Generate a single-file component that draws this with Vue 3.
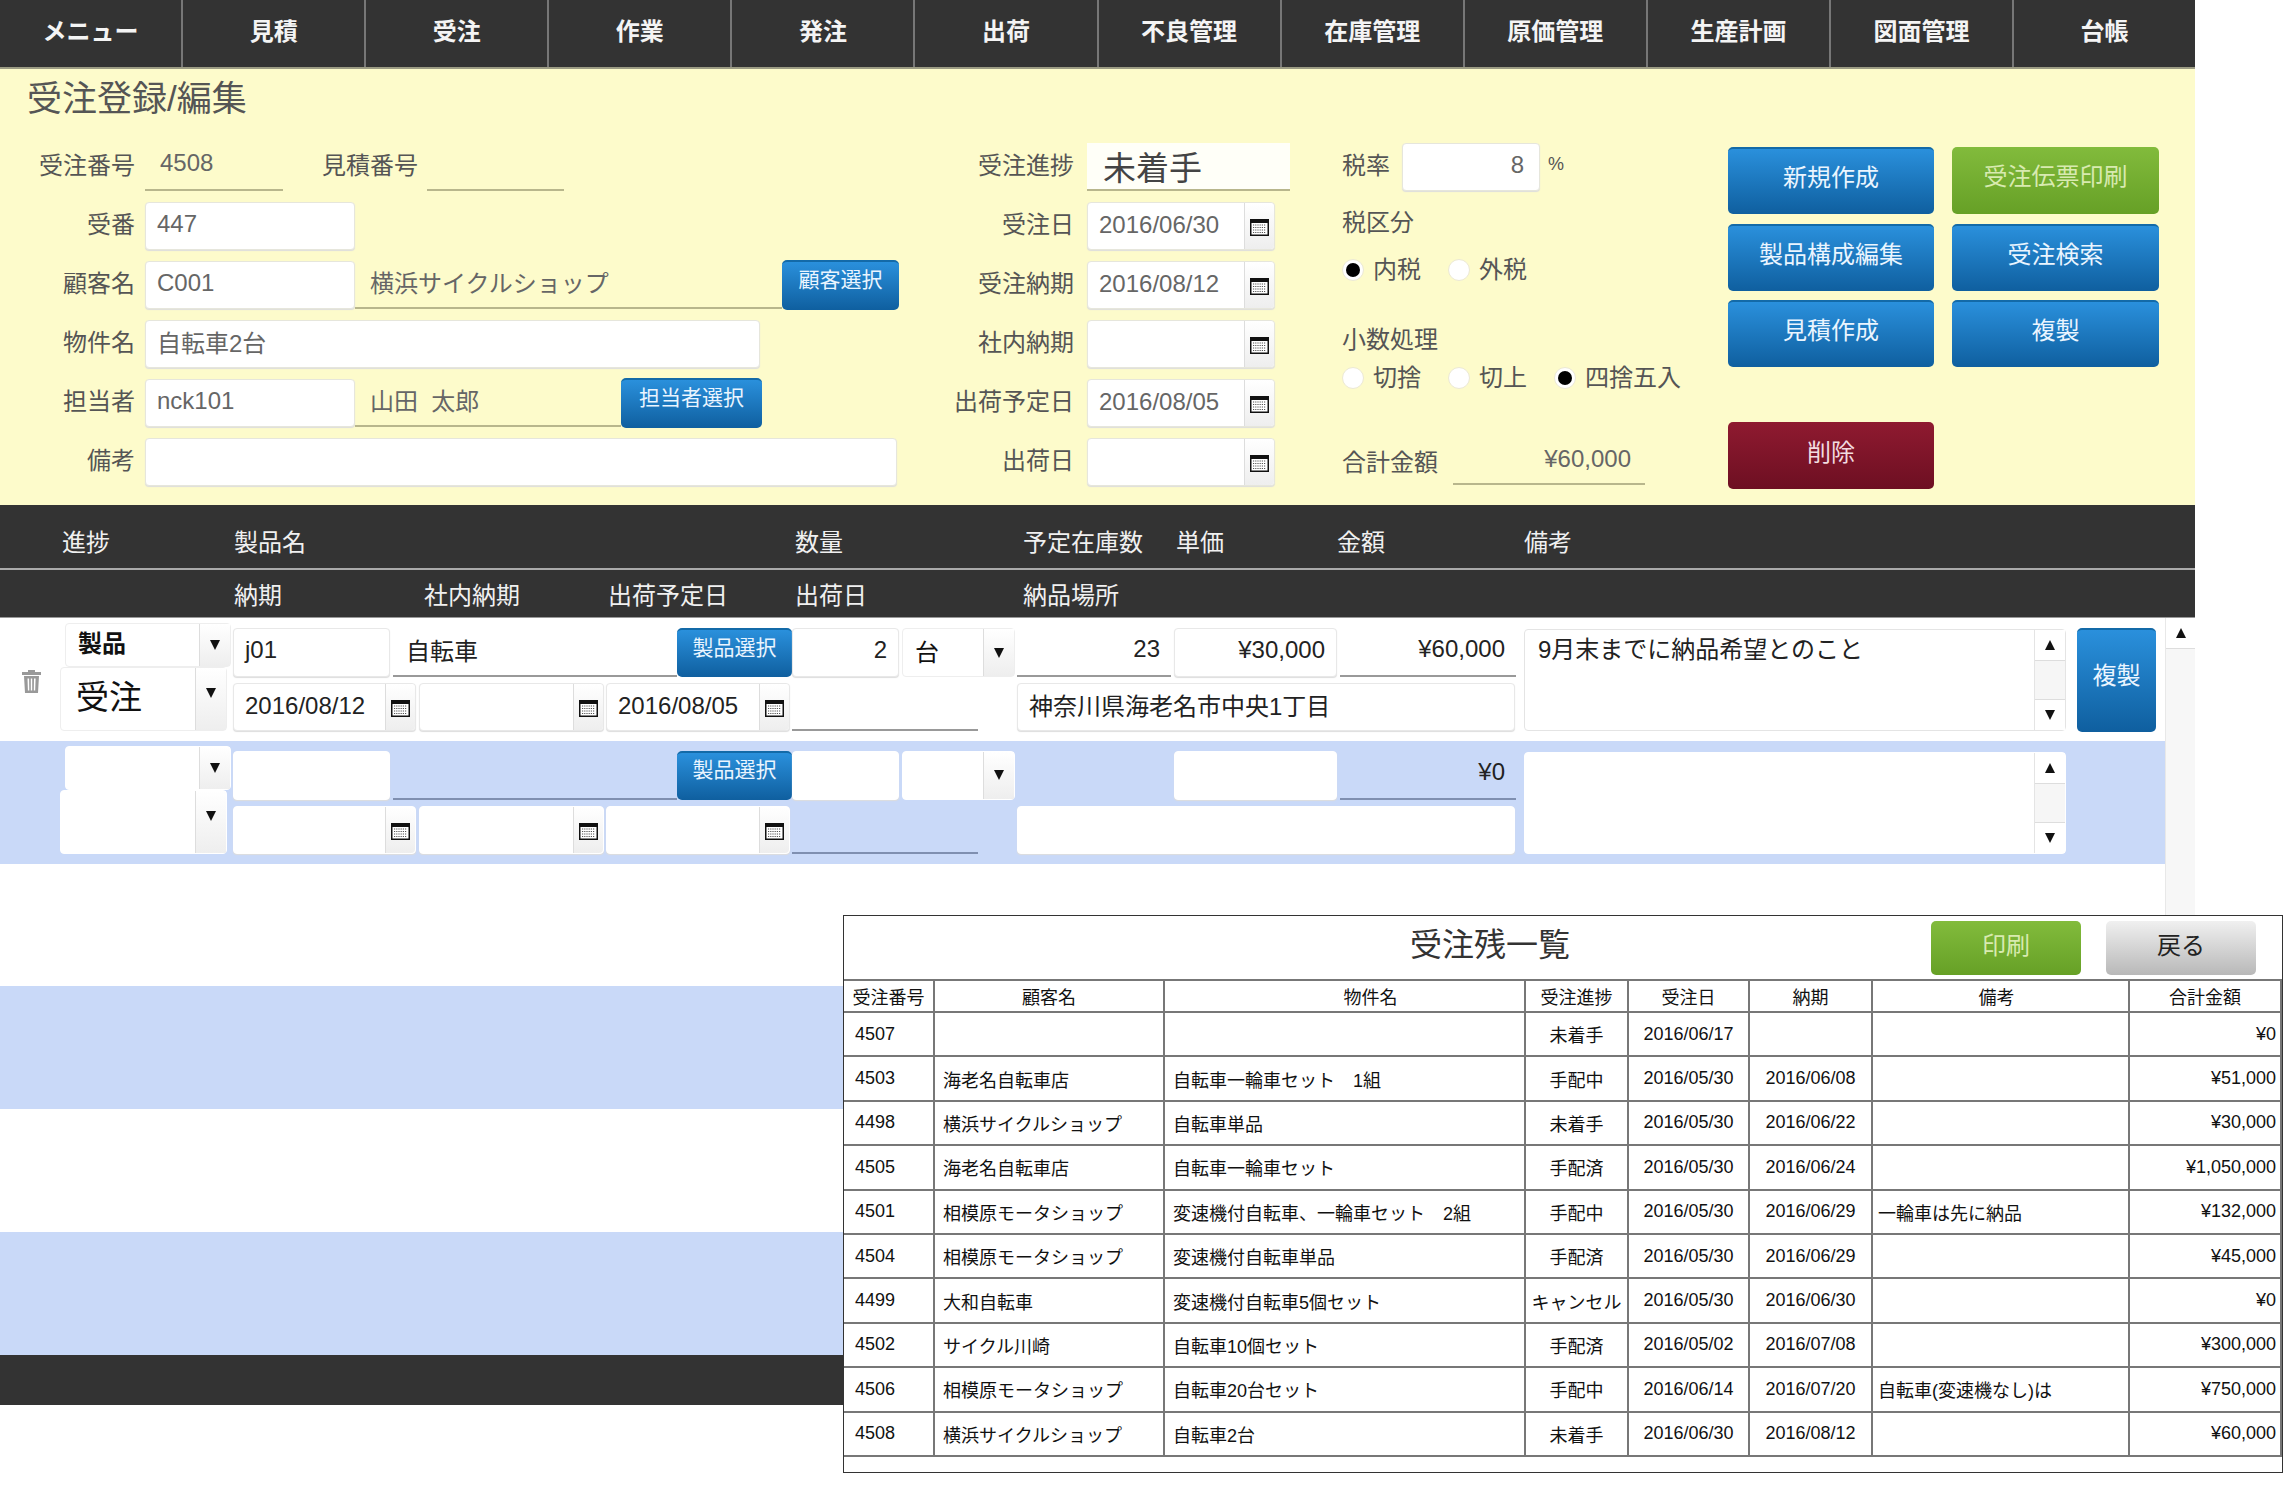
<template>
  <div class="app">
    <svg class="defs" width="0" height="0">
      <symbol id="cal" viewBox="0 0 19 17">
        <rect width="19" height="17" fill="#111" />
        <rect x="1.5" y="4" width="16" height="11.5" fill="#fff" />
        <path d="M3 6h13M3 8.5h13M3 11h13M3 13.5h13" stroke="#555" stroke-width="1" stroke-dasharray="1.2 1" />
      </symbol>
    </svg>

    <div class="page">
      <nav class="nav">
        <div v-for="item in navItems" :key="item" class="nav-item">{{ item }}</div>
      </nav>

      <section class="head">
        <h1 class="title">受注登録/編集</h1>
        <div class="form">
          <div class="col-left">
            <div class="f-row">
              <span class="label">受注番号</span>
              <span class="line line-no">4508</span>
              <span class="label label-est">見積番号</span>
              <span class="line line-est"></span>
            </div>
            <div class="f-row">
              <span class="label">受番</span>
              <div class="field w-code">447</div>
            </div>
            <div class="f-row">
              <span class="label">顧客名</span>
              <div class="field w-code">C001</div>
              <span class="line line-cust">横浜サイクルショップ</span>
              <button class="btn blue btn-cust">顧客選択</button>
            </div>
            <div class="f-row">
              <span class="label">物件名</span>
              <div class="field w-name">自転車2台</div>
            </div>
            <div class="f-row">
              <span class="label">担当者</span>
              <div class="field w-code">nck101</div>
              <span class="line line-staff">山田&nbsp;&nbsp;太郎</span>
              <button class="btn blue btn-staff">担当者選択</button>
            </div>
            <div class="f-row">
              <span class="label">備考</span>
              <div class="field w-note"></div>
            </div>
          </div>

          <div class="col-mid">
            <div class="f-row">
              <span class="label label-mid">受注進捗</span>
              <div class="status">未着手</div>
            </div>
            <div v-for="d in headDates" :key="d.label" class="f-row">
              <span class="label label-mid">{{ d.label }}</span>
              <div class="field date w-date">
                <span class="date-text">{{ d.value }}</span>
                <span class="addon"><svg width="19" height="17"><use href="#cal" /></svg></span>
              </div>
            </div>
          </div>

          <div class="col-tax">
            <div class="tax-rate">
              <span class="label-tax">税率</span>
              <div class="field rate">8</div>
              <span class="pct">%</span>
            </div>
            <div class="label-tax tax-kind">税区分</div>
            <div class="radios radios-tax">
              <span class="radio on"></span><span class="r-text">内税</span>
              <span class="radio"></span><span class="r-text">外税</span>
            </div>
            <div class="label-tax tax-round">小数処理</div>
            <div class="radios">
              <span class="radio"></span><span class="r-text">切捨</span>
              <span class="radio"></span><span class="r-text">切上</span>
              <span class="radio on"></span><span class="r-text">四捨五入</span>
            </div>
            <div class="tax-total">
              <span class="label-tax">合計金額</span>
              <span class="total">¥60,000</span>
            </div>
          </div>

          <div class="col-btn">
            <div class="btn-grid">
              <button class="btn blue">新規作成</button>
              <button class="btn green">受注伝票印刷</button>
              <button class="btn blue">製品構成編集</button>
              <button class="btn blue">受注検索</button>
              <button class="btn blue">見積作成</button>
              <button class="btn blue">複製</button>
            </div>
            <button class="btn red btn-del">削除</button>
          </div>
        </div>
      </section>

      <div class="thead">
        <div class="th-row th-1">
          <span></span><span>進捗</span><span>製品名</span><span>数量</span><span>予定在庫数</span><span>単価</span><span>金額</span><span>備考</span>
        </div>
        <div class="th-row th-2">
          <span></span><span>納期</span><span>社内納期</span><span>出荷予定日</span><span>出荷日</span><span>納品場所</span>
        </div>
      </div>

      <div class="body">
        <div class="rows">
          <div v-for="(row, i) in rows" :key="i" class="row" :class="{ alt: i % 2 === 1 }">
            <template v-if="row">
              <div class="trash-col">
                <svg v-if="row.filled" width="21" height="24" viewBox="0 0 21 24">
                  <path d="M7 3V1h7v2h6v3H1V3z" fill="#999" />
                  <path d="M3 7h15l-1 17H4zM6.5 9.5l.4 12h1.4l-.2-12zM9.8 9.5v12h1.4v-12zM13 9.5l-.2 12h1.4l.4-12z" fill="#999" fill-rule="evenodd" />
                </svg>
              </div>
              <div class="select-col">
                <div class="select sel-a">
                  <span class="sel-text">{{ row.kind }}</span>
                  <span class="sel-arrow"><i class="down"></i></span>
                </div>
                <div class="select sel-b">
                  <span class="sel-text">{{ row.order }}</span>
                  <span class="sel-arrow"><i class="down"></i></span>
                </div>
              </div>
              <div class="main-col">
                <div class="line-a">
                  <div class="field cell c-code">{{ row.code }}</div>
                  <div class="under c-name">{{ row.name }}</div>
                  <button class="btn blue c-pick">製品選択</button>
                  <div class="field cell c-qty right">{{ row.qty }}</div>
                  <div class="select c-unit">
                    <span class="sel-text">{{ row.unit }}</span>
                    <span class="sel-arrow"><i class="down"></i></span>
                  </div>
                  <div class="c-stock right" :class="{ under: row.filled }">{{ row.stock }}</div>
                  <div class="field cell c-price right">{{ row.price }}</div>
                  <div class="under c-amount right">{{ row.amount }}</div>
                </div>
                <div class="line-b">
                  <div v-for="(d, j) in row.dates" :key="j" class="field cell date" :class="'d-' + j">
                    <span class="date-text">{{ d }}</span>
                    <span class="addon"><svg width="19" height="17"><use href="#cal" /></svg></span>
                  </div>
                  <div class="under c-ship"></div>
                  <div class="field cell c-place">{{ row.place }}</div>
                </div>
              </div>
              <div class="area">
                <div class="area-text">{{ row.note }}</div>
                <div class="area-bar">
                  <span class="bar-btn"><i class="up"></i></span>
                  <span class="bar-btn"><i class="down"></i></span>
                </div>
              </div>
              <button v-if="row.filled" class="btn blue c-copy">複製</button>
            </template>
          </div>
        </div>
        <div class="scroll">
          <span class="scroll-up"><i class="up"></i></span>
        </div>
      </div>
      <div class="foot"></div>
    </div>

    <div class="panel">
      <div class="panel-head">
        <div class="panel-title">受注残一覧</div>
        <button class="btn green p-btn">印刷</button>
        <button class="btn gray p-btn">戻る</button>
      </div>
      <table class="list">
        <colgroup>
          <col v-for="w in colWidths" :key="w.id" :style="{ width: w.px + 'px' }" />
        </colgroup>
        <thead>
          <tr>
            <th v-for="c in listHead" :key="c">{{ c }}</th>
          </tr>
        </thead>
        <tbody>
          <tr v-for="o in orders" :key="o[0]">
            <td>{{ o[0] }}</td>
            <td class="tight">{{ o[1] }}</td>
            <td class="tight">{{ o[2] }}</td>
            <td class="mid">{{ o[3] }}</td>
            <td class="mid">{{ o[4] }}</td>
            <td class="mid">{{ o[5] }}</td>
            <td class="tighter">{{ o[6] }}</td>
            <td class="right">{{ o[7] }}</td>
          </tr>
        </tbody>
      </table>
    </div>
  </div>
</template>

<script setup>
const navItems = ['メニュー', '見積', '受注', '作業', '発注', '出荷', '不良管理', '在庫管理', '原価管理', '生産計画', '図面管理', '台帳']

const headDates = [
  { label: '受注日', value: '2016/06/30' },
  { label: '受注納期', value: '2016/08/12' },
  { label: '社内納期', value: '' },
  { label: '出荷予定日', value: '2016/08/05' },
  { label: '出荷日', value: '' },
]

const rows = [
  {
    filled: true,
    kind: '製品',
    order: '受注',
    code: 'j01',
    name: '自転車',
    qty: '2',
    unit: '台',
    stock: '23',
    price: '¥30,000',
    amount: '¥60,000',
    dates: ['2016/08/12', '', '2016/08/05'],
    place: '神奈川県海老名市中央1丁目',
    note: '9月末までに納品希望とのこと',
  },
  {
    filled: false,
    kind: '',
    order: '',
    code: '',
    name: '',
    qty: '',
    unit: '',
    stock: '',
    price: '',
    amount: '¥0',
    dates: ['', '', ''],
    place: '',
    note: '',
  },
  null,
  null,
  null,
  null,
]

const colWidths = [90, 230, 361, 103, 121, 123, 257, 152].map((px, id) => ({ id, px }))
const listHead = ['受注番号', '顧客名', '物件名', '受注進捗', '受注日', '納期', '備考', '合計金額']

const orders = [
  ['4507', '', '', '未着手', '2016/06/17', '', '', '¥0'],
  ['4503', '海老名自転車店', '自転車一輪車セット　1組', '手配中', '2016/05/30', '2016/06/08', '', '¥51,000'],
  ['4498', '横浜サイクルショップ', '自転車単品', '未着手', '2016/05/30', '2016/06/22', '', '¥30,000'],
  ['4505', '海老名自転車店', '自転車一輪車セット', '手配済', '2016/05/30', '2016/06/24', '', '¥1,050,000'],
  ['4501', '相模原モータショップ', '変速機付自転車、一輪車セット　2組', '手配中', '2016/05/30', '2016/06/29', '一輪車は先に納品', '¥132,000'],
  ['4504', '相模原モータショップ', '変速機付自転車単品', '手配済', '2016/05/30', '2016/06/29', '', '¥45,000'],
  ['4499', '大和自転車', '変速機付自転車5個セット', 'キャンセル', '2016/05/30', '2016/06/30', '', '¥0'],
  ['4502', 'サイクル川崎', '自転車10個セット', '手配済', '2016/05/02', '2016/07/08', '', '¥300,000'],
  ['4506', '相模原モータショップ', '自転車20台セット', '手配中', '2016/06/14', '2016/07/20', '自転車(変速機なし)は', '¥750,000'],
  ['4508', '横浜サイクルショップ', '自転車2台', '未着手', '2016/06/30', '2016/08/12', '', '¥60,000'],
]
</script>

<style>
html,
body {
  margin: 0;
  background: #fff;
}
</style>

<style scoped>
.app {
  position: relative;
  width: 2284px;
  height: 1487px;
  overflow: hidden;
  background: #fff;
  font-family: 'Liberation Sans', 'Noto Sans CJK JP', sans-serif;
  font-size: 24px;
  color: #444;
}

.defs {
  position: absolute;
}

.page {
  width: 2195px;
}

button {
  font-family: inherit;
  cursor: pointer;
}

/* nav */
.nav {
  display: grid;
  grid-template-columns: repeat(11, 183.1px) 1fr;
  height: 69px;
  box-sizing: border-box;
  background: #333;
  border-bottom: 2px solid #9c9c84;
}

.nav-item {
  display: flex;
  align-items: center;
  justify-content: center;
  padding-bottom: 9px;
  border-right: 2px solid #777;
  color: #f4f4f4;
  font-size: 24px;
  font-weight: 700;
}

.nav-item:last-child {
  border-right: none;
}

/* head */
.head {
  height: 436px;
  box-sizing: border-box;
  background: #fdfbcb;
}

.title {
  height: 74px;
  margin: 0;
  padding: 5px 0 0 27px;
  box-sizing: border-box;
  font-size: 35px;
  font-weight: 400;
  line-height: 50px;
  color: #555;
}

.form {
  display: flex;
}

.col-left {
  display: grid;
  grid-auto-rows: 48px;
  row-gap: 11px;
  width: 910px;
}

.col-mid {
  display: grid;
  grid-auto-rows: 48px;
  row-gap: 11px;
  width: 432px;
}

.f-row {
  display: flex;
  align-items: center;
}

.label {
  width: 135px;
  margin-right: 10px;
  padding-bottom: 8px;
  text-align: right;
  white-space: nowrap;
  flex: none;
  color: #555;
}

.label-est {
  width: 98px;
  margin: 0 9px 0 37px;
}

.label-mid {
  width: 164px;
  margin-right: 13px;
}

.line {
  display: flex;
  align-items: center;
  height: 48px;
  box-sizing: border-box;
  padding-bottom: 6px;
  border-bottom: 2px solid #b8b68c;
  color: #666;
}

.line-no {
  width: 138px;
  padding-left: 15px;
}

.line-est {
  width: 137px;
}

.line-cust {
  width: 427px;
  padding-left: 15px;
}

.line-staff {
  width: 266px;
  padding-left: 15px;
}

.field {
  display: flex;
  align-items: center;
  height: 48px;
  box-sizing: border-box;
  padding-left: 11px;
  padding-bottom: 5px;
  background: #fff;
  border: 1px solid #e6e6dc;
  border-radius: 4px;
  box-shadow: 0 1px 1px #ddd;
  color: #666;
}

.w-code {
  width: 210px;
}

.w-name {
  width: 615px;
}

.w-note {
  width: 752px;
}

.w-date {
  width: 188px;
}

.date {
  padding: 0 0 0 11px;
  justify-content: space-between;
}

.date-text {
  margin-bottom: 3px;
  white-space: nowrap;
}

.addon {
  display: flex;
  align-items: center;
  justify-content: center;
  flex: none;
  width: 30px;
  height: 100%;
  border-left: 1px solid #ddd;
  background: linear-gradient(#fff, #eee);
  border-radius: 0 4px 4px 0;
  padding-top: 3px;
  box-sizing: border-box;
}

.status {
  display: flex;
  align-items: center;
  width: 203px;
  height: 48px;
  box-sizing: border-box;
  padding-left: 16px;
  background: #fffff8;
  border-bottom: 2px solid #b8b68c;
  font-size: 33px;
  color: #444;
}

.btn {
  display: flex;
  align-items: center;
  justify-content: center;
  padding: 0 0 12px;
  border: none;
  border-radius: 5px;
  font-size: 24px;
  white-space: nowrap;
}

.blue {
  background: linear-gradient(#2a90dc, #0f5f9f);
  border-top: 2px solid #136aa8;
  color: #eaf5ff;
}

.green {
  background: linear-gradient(#82bb3c, #66a026);
  color: #d8eab0;
}

.red {
  background: linear-gradient(#8f1a30, #6d0f22);
  color: #f2dce0;
}

.gray {
  background: linear-gradient(#f0f0f0, #b8b8b8);
  color: #222;
}

.btn-cust {
  width: 117px;
  height: 50px;
  padding-bottom: 16px;
  font-size: 21px;
}

.btn-staff {
  width: 141px;
  height: 50px;
  padding-bottom: 16px;
  font-size: 21px;
}

/* tax */
.col-tax {
  width: 386px;
  display: flex;
  flex-direction: column;
}

.label-tax {
  color: #555;
}

.tax-rate {
  display: flex;
  align-items: center;
  height: 48px;
}

.tax-rate .label-tax {
  padding-bottom: 8px;
}

.rate {
  justify-content: flex-end;
  width: 138px;
  margin-left: 12px;
  padding-right: 15px;
}

.pct {
  margin-left: 8px;
  padding-bottom: 6px;
  font-size: 18px;
  color: #555;
}

.tax-kind {
  margin-top: 12px;
  height: 40px;
  line-height: 40px;
}

.radios {
  display: flex;
  align-items: center;
  height: 40px;
}

.radios-tax {
  margin-top: 7px;
}

.tax-round {
  margin-top: 31px;
  height: 37px;
  line-height: 37px;
}

.radio {
  display: flex;
  align-items: center;
  justify-content: center;
  width: 22px;
  height: 22px;
  box-sizing: border-box;
  background: #fff;
  border: 1px solid #ece9d4;
  border-radius: 50%;
  flex: none;
}

.radio.on::after {
  content: '';
  width: 14px;
  height: 14px;
  background: #000;
  border-radius: 50%;
}

.r-text {
  width: 84px;
  padding: 0 0 6px 9px;
  box-sizing: border-box;
  color: #555;
  white-space: nowrap;
}

.tax-total {
  display: flex;
  align-items: center;
  margin-top: 39px;
  height: 48px;
}

.tax-total .label-tax {
  padding-bottom: 2px;
}

.total {
  display: flex;
  align-items: center;
  justify-content: flex-end;
  width: 192px;
  height: 100%;
  box-sizing: border-box;
  margin-left: 15px;
  padding: 0 14px 2px 0;
  border-bottom: 2px solid #b8b68c;
  color: #666;
}

.col-btn {
  padding-top: 4px;
}

.btn-grid {
  display: grid;
  grid-template-columns: 206px 207px;
  grid-auto-rows: 67px;
  gap: 9.5px 18px;
}

.btn-del {
  width: 206px;
  height: 67px;
  margin-top: 55px;
  padding-bottom: 10px;
}

/* list head */
.thead {
  height: 113px;
  background: #333;
  color: #f0f0f0;
}

.th-row {
  display: grid;
  align-items: center;
}

.th-1 {
  height: 65px;
  box-sizing: border-box;
  padding-top: 8px;
  grid-template-columns: 62px 172px 561px 228px 153px 161px 187px 1fr;
  border-bottom: 2px solid #aaa;
}

.th-2 {
  height: 48px;
  grid-template-columns: 234px 190px 184px 187px 228px 1fr;
  border-bottom: 1px solid #999;
  box-sizing: border-box;
}

/* rows */
.body {
  display: flex;
  height: 737px;
}

.rows {
  width: 2165px;
}

.row {
  display: flex;
  align-items: flex-start;
  height: 122.83px;
  background: #fff;
}

.row.alt {
  background: #c9d9f8;
}

.trash-col {
  display: flex;
  justify-content: flex-end;
  width: 42px;
  margin-right: 18px;
  padding-top: 51px;
}

.select-col {
  width: 173px;
  padding-top: 5px;
}

.select {
  display: flex;
  background: #fff;
  border: 1px solid #eee;
  border-radius: 4px;
  box-sizing: border-box;
  color: #111;
}

.sel-text {
  flex: 1;
  display: flex;
  align-items: center;
  min-width: 0;
  padding-left: 12px;
  white-space: nowrap;
}

.sel-arrow {
  display: flex;
  align-items: center;
  justify-content: center;
  flex: none;
  width: 30px;
  border-left: 1px solid #ddd;
  background: linear-gradient(#fff, #eee);
}

.sel-a {
  width: 166px;
  height: 44px;
  margin-left: 5px;
  font-weight: 700;
}

.sel-a .sel-text {
  padding-bottom: 7px;
}

.sel-b {
  width: 167px;
  height: 64px;
  font-size: 33px;
}

.sel-b .sel-text {
  padding: 0 0 8px 15px;
}

.sel-b .sel-arrow {
  padding-bottom: 12px;
}

.down,
.up {
  display: block;
  width: 0;
  height: 0;
  border-left: 5px solid transparent;
  border-right: 5px solid transparent;
}

.down {
  border-top: 10px solid #111;
}

.up {
  border-bottom: 10px solid #111;
}

.main-col {
  width: 1283px;
  padding-top: 10px;
  color: #222;
}

.line-a,
.line-b {
  display: flex;
  align-items: flex-end;
  height: 49px;
}

.line-b {
  height: 48px;
  margin-top: 6px;
}

.cell {
  color: #222;
  border-color: #e8e8e8;
}

.alt .cell,
.alt .select {
  border-color: #fff;
}

.under {
  display: flex;
  align-items: center;
  height: 49px;
  box-sizing: border-box;
  padding-bottom: 5px;
  border-bottom: 2px solid #999;
}

.alt .under {
  border-bottom-color: #7f8fb0;
}

.right {
  justify-content: flex-end;
  padding-right: 11px;
}

.c-code {
  width: 157px;
  height: 49px;
  margin-right: 3px;
}

.c-name {
  width: 284px;
  padding-left: 13px;
}

.c-pick {
  width: 115px;
  height: 49px;
  padding-bottom: 16px;
  font-size: 21px;
}

.c-qty {
  width: 107px;
  height: 49px;
  margin-right: 3px;
}

.c-unit {
  width: 113px;
  height: 49px;
  margin-right: 2px;
}

.c-unit .sel-text {
  font-size: 24px;
  padding: 0 0 5px 12px;
}

.c-stock {
  display: flex;
  align-items: center;
  width: 154px;
  height: 49px;
  margin-right: 3px;
  padding-bottom: 5px;
  box-sizing: border-box;
}

.c-price {
  width: 163px;
  height: 49px;
  margin-right: 3px;
}

.c-amount {
  width: 176px;
}

.d-0 {
  width: 183px;
  margin-right: 3px;
}

.d-1 {
  width: 185px;
  margin-right: 2px;
}

.d-2 {
  width: 184px;
  margin-right: 2px;
}

.c-ship {
  width: 186px;
  height: 48px;
  margin-right: 39px;
}

.c-place {
  width: 498px;
}

.area {
  display: flex;
  width: 542px;
  height: 102px;
  margin: 11px 0 0 8px;
  box-sizing: border-box;
  background: #fff;
  border: 1px solid #e4e4e4;
  border-radius: 4px;
  color: #222;
}

.alt .area {
  border-color: #fff;
}

.area-text {
  flex: 1;
  padding: 0 0 0 13px;
}

.area-bar {
  display: flex;
  flex-direction: column;
  justify-content: space-between;
  width: 30px;
  border-left: 1px solid #e4e4e4;
  background: #f6f6f6;
}

.bar-btn {
  display: flex;
  align-items: center;
  justify-content: center;
  height: 30px;
  background: #fff;
}

.bar-btn:first-child {
  border-bottom: 1px solid #ddd;
}

.bar-btn:last-child {
  border-top: 1px solid #ddd;
}

.c-copy {
  width: 79px;
  height: 104px;
  margin: 10px 0 0 11px;
  padding: 0 0 16px;
}

.scroll {
  width: 30px;
  background: #f7f7f7;
  border-left: 1px solid #e8e8e8;
  box-sizing: border-box;
}

.scroll-up {
  display: flex;
  align-items: center;
  justify-content: center;
  height: 30px;
  background: #fff;
  border-bottom: 1px solid #ddd;
}

.foot {
  height: 50px;
  background: #333;
}

/* overlay */
.panel {
  position: absolute;
  left: 843px;
  top: 915px;
  width: 1440px;
  height: 558px;
  box-sizing: border-box;
  background: #fff;
  border: 1px solid #333;
  color: #111;
}

.panel-head {
  display: flex;
  align-items: center;
  height: 63px;
  padding-left: 566px;
}

.panel-title {
  font-size: 32px;
  color: #333;
  margin-right: 361px;
  padding-bottom: 12px;
  white-space: nowrap;
}

.p-btn {
  width: 150px;
  height: 54px;
  margin-right: 25px;
  padding-bottom: 8px;
}

.list {
  width: 1436px;
  table-layout: fixed;
  border-collapse: collapse;
  font-size: 18px;
}

.list th {
  height: 32px;
  padding: 0;
  box-sizing: border-box;
  border: 2px solid #777;
  border-left-width: 1px;
  font-weight: 400;
  white-space: nowrap;
}

.list th:nth-child(3) {
  padding-left: 52px;
}

.list th:nth-child(7) {
  padding-right: 8px;
}

.list td {
  height: 44.4px;
  padding: 0 4px 0 11px;
  box-sizing: border-box;
  border: 2px solid #777;
  white-space: nowrap;
  overflow: hidden;
}

.list th:first-child,
.list td:first-child {
  border-left: none;
}

.list td.tight {
  padding-left: 8px;
}

.list td.tighter {
  padding-left: 5px;
}

.list td.mid {
  padding: 0;
  text-align: center;
}

.list td.right {
  text-align: right;
}
</style>
